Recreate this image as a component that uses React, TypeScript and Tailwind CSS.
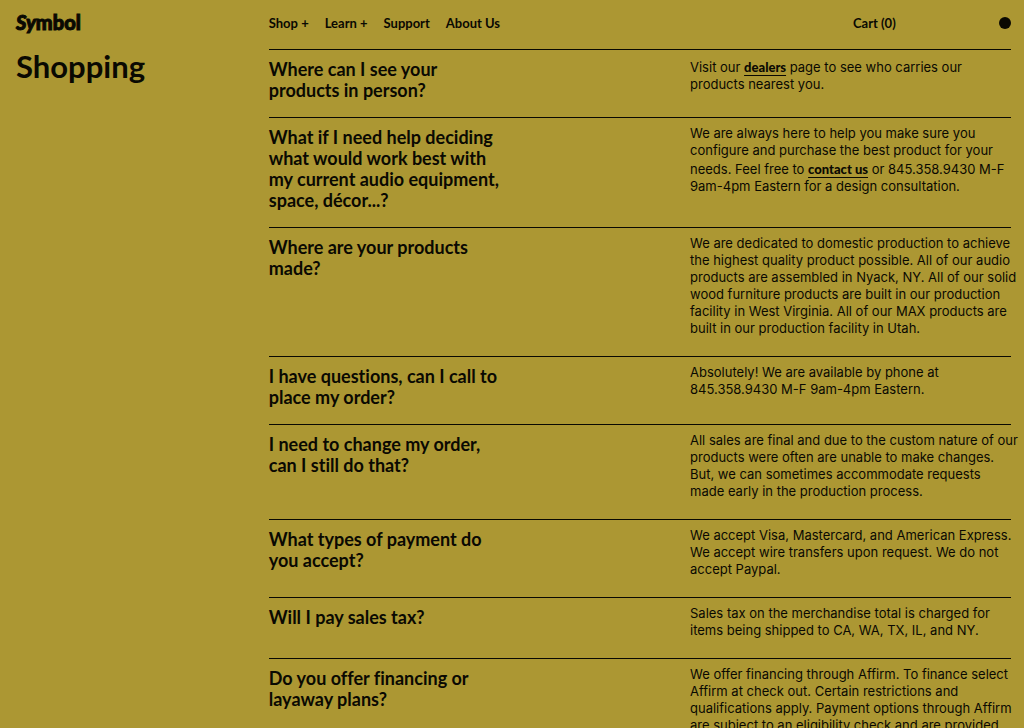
import type { ReactNode } from "react";

type Faq = {
  question: string;
  answer: ReactNode;
};

function TextLink({ href, children }: { href: string; children: ReactNode }) {
  return (
    <a
      href={href}
      className="inline-block pt-0.5 font-['Lato'] text-[13px] leading-[17px] font-black underline decoration-1 underline-offset-3"
    >
      {children}
    </a>
  );
}

const faqs: Faq[] = [
  {
    question: "Where can I see your\nproducts in person?",
    answer: (
      <>
        Visit our <TextLink href="/dealers">dealers</TextLink> page to see who
        carries our{"\n"}products nearest you.
      </>
    ),
  },
  {
    question:
      "What if I need help deciding\nwhat would work best with\nmy current audio equipment,\nspace, décor...?",
    answer: (
      <>
        We are always here to help you make sure you{"\n"}configure and purchase
        the best product for your{"\n"}needs. Feel free to{" "}
        <TextLink href="/contact">contact us</TextLink> or 845.358.9430 M-F
        {"\n"}9am-4pm Eastern for a design consultation.
      </>
    ),
  },
  {
    question: "Where are your products\nmade?",
    answer:
      "We are dedicated to domestic production to achieve\nthe highest quality product possible. All of our audio\nproducts are assembled in Nyack, NY. All of our solid\nwood furniture products are built in our production\nfacility in West Virginia. All of our MAX products are\nbuilt in our production facility in Utah.",
  },
  {
    question: "I have questions, can I call to\nplace my order?",
    answer:
      "Absolutely! We are available by phone at\n845.358.9430 M-F 9am-4pm Eastern.",
  },
  {
    question: "I need to change my order,\ncan I still do that?",
    answer:
      "All sales are final and due to the custom nature of our\nproducts were often are unable to make changes.\nBut, we can sometimes accommodate requests\nmade early in the production process.",
  },
  {
    question: "What types of payment do\nyou accept?",
    answer:
      "We accept Visa, Mastercard, and American Express.\nWe accept wire transfers upon request. We do not\naccept Paypal.",
  },
  {
    question: "Will I pay sales tax?",
    answer:
      "Sales tax on the merchandise total is charged for\nitems being shipped to CA, WA, TX, IL, and NY.",
  },
  {
    question: "Do you offer financing or\nlayaway plans?",
    answer:
      "We offer financing through Affirm. To finance select\nAffirm at check out. Certain restrictions and\nqualifications apply. Payment options through Affirm\nare subject to an eligibility check and are provided",
  },
];

function FaqRow({ question, answer }: Faq) {
  return (
    <article className="grid grid-cols-9 gap-x-4 border-t border-[#0a0902]">
      <h2 className="col-span-5 pt-[9px] pb-4 font-['Lato'] text-lg leading-[21px] font-bold whitespace-pre-line [font-variant-ligatures:none]">
        {question}
      </h2>
      <p className="col-span-4 pt-[7px] pb-[19px] text-[13px] leading-[17px] whitespace-pre">
        {answer}
      </p>
    </article>
  );
}

function Header() {
  return (
    <header className="grid h-[49px] grid-cols-12 items-start gap-x-4 pt-3 font-['Lato'] text-[13px] leading-[22px] font-bold">
      <a
        href="/"
        className="col-span-3 text-xl leading-5 font-black [-webkit-text-stroke:1px_#0a0902]"
      >
        <i>Sy</i>mbol
      </a>
      <div className="col-span-9 flex justify-between">
        <nav className="flex gap-4">
          <button type="button">Shop +</button>
          <button type="button">Learn +</button>
          <a href="/support">Support</a>
          <a href="/about">About Us</a>
        </nav>
        <div className="flex w-[158px] items-center justify-between">
          <button type="button">Cart (0)</button>
          <button
            type="button"
            aria-label="Change color"
            className="size-3 rounded-full bg-[#0a0902]"
          />
        </div>
      </div>
    </header>
  );
}

export default function App() {
  return (
    <div className="h-screen overflow-x-hidden overflow-y-auto bg-[#ac9733] pr-[13px] pl-4 font-['Inter','Liberation_Sans',sans-serif] text-[#0a0902] [scrollbar-width:none]">
      <Header />
      <main className="grid grid-cols-12 gap-x-4">
        <h1 className="col-span-3 font-['Lato'] text-[31px] leading-[34px] font-bold">
          Shopping
        </h1>
        <section className="col-span-9">
          {faqs.map((faq) => (
            <FaqRow key={faq.question} {...faq} />
          ))}
        </section>
      </main>
    </div>
  );
}
